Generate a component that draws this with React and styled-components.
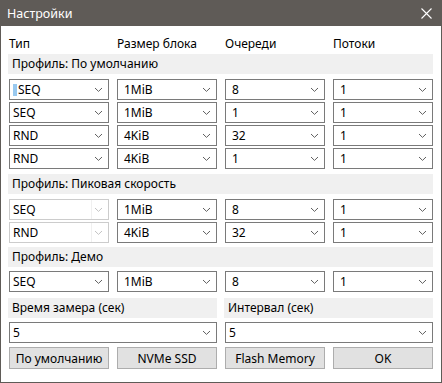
import React from 'react'
import styled, { createGlobalStyle } from 'styled-components'

const GlobalStyle = createGlobalStyle`
  html, body {
    margin: 0;
    padding: 0;
    background: #ffffff;
  }
  body {
    font-family: "Noto Sans", "Open Sans", "DejaVu Sans", sans-serif;
    font-size: 12px;
    color: #000;
  }
`

const Window = styled.div`
  width: 442px;
  height: 383px;
  box-sizing: border-box;
  border: 1px solid #5f5b57;
  border-top: none;
  display: flex;
  flex-direction: column;
  background: #fff;
`

const TitleBar = styled.div`
  height: 26px;
  margin: 0 -1px;
  background: #5f5b57;
  color: #fff;
  display: flex;
  align-items: center;
  justify-content: space-between;
  padding: 0 10px 0 7px;
  font-size: 12.5px;
`

const Body = styled.div`
  padding: 8px 8px 0 8px;
  display: flex;
  flex-direction: column;
`

const Grid = styled.div`
  display: grid;
  grid-template-columns: repeat(4, 100px);
  column-gap: 8px;
  row-gap: ${p => p.$rowGap || 2}px;
  margin-top: ${p => p.$top || 0}px;
`

const HeaderLabel = styled.div`
  height: 20px;
  line-height: 20px;
  white-space: nowrap;
`

const Bar = styled.div`
  height: 20px;
  line-height: 20px;
  margin: ${p => p.$top || 0}px 0 0 -1px;
  padding-left: 4px;
  background: #f0f0f0;
  white-space: nowrap;
  grid-column: ${p => p.$span || 'auto'};
`

const Combo = styled.div`
  position: relative;
  height: 21px;
  box-sizing: border-box;
  border: 1px solid ${p => (p.$disabled ? '#cccccc' : '#7a7a7a')};
  background: #fff;
  display: flex;
  align-items: center;
  padding-left: ${p => p.$pad || 6}px;
  grid-column: ${p => p.$span || 'auto'};
  white-space: nowrap;
`

const EditArea = styled.div`
  position: absolute;
  left: 0;
  top: 0;
  bottom: 0;
  width: 81px;
  border-right: 1px solid #f0f0f0;
`

const Caret = styled.span`
  display: inline-block;
  width: 4px;
  height: 12px;
  background: #99c9ef;
  margin-right: 1px;
`

const Label = styled.span`
  position: relative;
`

const Chevron = styled.svg`
  position: absolute;
  right: 5px;
  top: 7px;
`

const Buttons = styled(Grid)`
  margin-top: 4px;
`

const Button = styled.div`
  height: 22px;
  box-sizing: border-box;
  border: 1px solid #adadad;
  background: #e1e1e1;
  display: flex;
  align-items: center;
  justify-content: center;
  white-space: nowrap;
`

const Close = () => (
  <svg width="11" height="11" viewBox="0 0 11 11">
    <path d="M0.5 0.5 L10.5 10.5 M10.5 0.5 L0.5 10.5" stroke="#fff" strokeWidth="1.1" fill="none" />
  </svg>
)

const Select = ({ value, disabled, first, caret, span }) => (
  <Combo $disabled={disabled} $pad={first ? 3 : 6} $span={span}>
    {disabled && <EditArea />}
    {caret && <Caret />}
    <Label>{value}</Label>
    <Chevron width="9" height="6" viewBox="0 0 9 6">
      <path d="M1 1 L4.5 4.4 L8 1" stroke={disabled ? '#c4c4c4' : '#606060'} strokeWidth="1" fill="none" />
    </Chevron>
  </Combo>
)

const rowsDefault = [
  ['SEQ', '1MiB', '8', '1'],
  ['SEQ', '1MiB', '1', '1'],
  ['RND', '4KiB', '32', '1'],
  ['RND', '4KiB', '1', '1'],
]

const rowsPeak = [
  ['SEQ', '1MiB', '8', '1'],
  ['RND', '4KiB', '32', '1'],
]

const rowsDemo = [['SEQ', '1MiB', '8', '1']]

const Rows = ({ rows, disabledFirst, top, selectFirst }) => (
  <Grid $top={top}>
    {rows.map((r, i) =>
      r.map((v, j) => (
        <Select
          key={i + '-' + j}
          value={v}
          first={j === 0}
          caret={selectFirst && i === 0 && j === 0}
          disabled={disabledFirst && j === 0}
        />
      ))
    )}
  </Grid>
)

export default function App() {
  return (
    <>
      <GlobalStyle />
      <Window>
        <TitleBar>
          <span>Настройки</span>
          <Close />
        </TitleBar>
        <Body>
          <Grid>
            <HeaderLabel>Тип</HeaderLabel>
            <HeaderLabel>Размер блока</HeaderLabel>
            <HeaderLabel>Очереди</HeaderLabel>
            <HeaderLabel>Потоки</HeaderLabel>
          </Grid>
          <Bar>Профиль: По умолчанию</Bar>
          <Rows rows={rowsDefault} top={5} selectFirst />
          <Bar $top={5}>Профиль: Пиковая скорость</Bar>
          <Rows rows={rowsPeak} top={5} disabledFirst />
          <Bar $top={4}>Профиль: Демо</Bar>
          <Rows rows={rowsDemo} top={4} />
          <Grid $top={6} $rowGap={4}>
            <Bar $span="span 2">Время замера (сек)</Bar>
            <Bar $span="span 2">Интервал (сек)</Bar>
            <Select value="5" span="span 2" first />
            <Select value="5" span="span 2" first />
          </Grid>
          <Buttons>
            <Button>По умолчанию</Button>
            <Button>NVMe SSD</Button>
            <Button>Flash Memory</Button>
            <Button>OK</Button>
          </Buttons>
        </Body>
      </Window>
    </>
  )
}
